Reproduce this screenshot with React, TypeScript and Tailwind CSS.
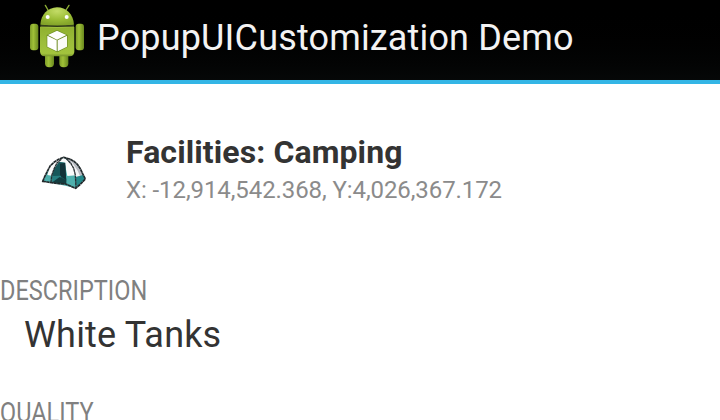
function AndroidIcon() {
  return (
    <svg className="h-20 w-20 shrink-0" viewBox="0 0 240 240" aria-hidden="true">
      <defs>
        <linearGradient id="body" x1="0" x2="0" y1="0" y2="1">
          <stop offset="0" stopColor="#8fb02f" />
          <stop offset=".5" stopColor="#9cbd3a" />
          <stop offset=".9" stopColor="#a3c43d" />
          <stop offset="1" stopColor="#75922a" />
        </linearGradient>
        <linearGradient id="limb" x1="0" x2="1">
          <stop offset="0" stopColor="#7d9c28" />
          <stop offset=".4" stopColor="#a0c138" />
          <stop offset="1" stopColor="#68871d" />
        </linearGradient>
        <radialGradient id="head" cx=".5" cy=".2" r=".75">
          <stop offset="0" stopColor="#c3dc67" />
          <stop offset=".6" stopColor="#9bbd36" />
          <stop offset="1" stopColor="#83a42a" />
        </radialGradient>
      </defs>
      <path d="M84 30 76 16M138 30l9-14" stroke="#8cad34" strokeWidth="4" strokeLinecap="round" />
      <rect x="75" y="153" width="27" height="49" rx="12" fill="url(#limb)" />
      <rect x="118" y="153" width="27" height="49" rx="12" fill="url(#limb)" />
      <rect x="30" y="71" width="25" height="80" rx="9" fill="url(#limb)" />
      <rect x="167" y="71" width="25" height="80" rx="9" fill="url(#limb)" />
      <path d="M60 81H163V154Q163 169 149 169H74Q60 169 60 154Z" fill="url(#body)" />
      <path d="M61 74C63 43 83 23 111 22C139 22 160 43 162 74Q112 83 61 74Z" fill="url(#head)" />
      <path d="M61 76Q111 81 162 76" fill="none" stroke="#34421a" strokeWidth="4" />
      <path d="M61 80Q111 85 162 80" fill="none" stroke="#acc84d" strokeWidth="2" />
      <circle cx="83" cy="51" r="6" fill="#fff" />
      <circle cx="140" cy="51" r="6" fill="#fff" />
      <path d="M80 105 111 90 143 105V141L112 157 80 141Z" fill="#6d8c22" />
      <path d="M84 105 111 92 139 105 111 119Z" fill="#fff" />
      <path d="M82 107 110 121V154L82 140Z" fill="#fff" />
      <path d="M141 107 113 121V154L141 140Z" fill="#fbfbf7" />
    </svg>
  );
}

function TentIcon() {
  return (
    <svg className="h-[60px] w-[70px] shrink-0" viewBox="0 0 210 180" aria-hidden="true">
      <path d="M38 124 53 92 71 68 101 52 132 63 151 86 163 116 137 144 67 129Z" fill="#4fb0ad" />
      <path d="M52 105 58 84 74 66 101 53 125 68 135 86 140 106 112 108 104 68 88 65 73 85 65 107Z" fill="#fafafa" />
      <path d="m108 53 24 11 19 23 8 19-18 5-10-28Z" fill="#b9bcc3" />
      <path d="m123 62 20 30 7 16-13 4-8-29Z" fill="#f4f4f5" />
      <path d="M67 108 72 88 87 66 106 68 109 130 68 128Z" fill="#17575a" />
      <path d="m90 71 15-2 4 52-19-14Z" fill="#123238" />
      <path d="m66 108 27-1-1 20-24-1Z" fill="#267e80" />
      <path d="m68 126 21-15 20 10-1 11Z" fill="#133d40" />
      <path d="m137 111 23-6 5 12-25 26Z" fill="#238889" />
      <path d="M38 124 44 110 53 92 61 77 74 65 86 58 101 52 119 57 132 64 143 74 151 86 158 101 166 117 151 133 137 145 107 132 81 130 52 126Z" fill="none" stroke="#22282b" strokeWidth="5" strokeDasharray="10 1" strokeLinejoin="round" />
      <path d="M94 58 81 69 72 87 65 107 63 127M108 55l15 16 8 14 5 20 2 36" fill="none" stroke="#282f33" strokeWidth="4" strokeDasharray="9 1" />
    </svg>
  );
}

export default function App() {
  return (
    <div className="h-[420px] w-[720px] overflow-hidden bg-white font-['Roboto',sans-serif]">
      <header className="flex h-[84px] border-b-4 border-[#33b5e5] bg-gradient-to-b from-black to-[#060808] pl-5">
        <AndroidIcon />
        <h1 className="-ml-[3px] mt-[14px] whitespace-nowrap text-[36px] leading-[48px] tracking-[0.16px] text-[#f3f3f3]">PopupUICustomization Demo</h1>
      </header>
      <section className="flex h-[190px] gap-[26px] pl-[30px] pt-[48px]">
        <div className="pt-2"><TentIcon /></div>
        <div>
          <h2 className="whitespace-nowrap text-[32px] font-bold leading-[40px] tracking-[0.1px] text-[#333]">Facilities: Camping</h2>
          <p className="whitespace-nowrap text-[24px] leading-[36px] tracking-[-0.09px] text-[#8b8b8b]">X: -12,914,542.368, Y:4,026,367.172</p>
        </div>
      </section>
      <section className="h-[122px]">
        <h3 className="origin-left scale-x-[0.84] text-[28px] leading-[34px] text-[#808080]">DESCRIPTION</h3>
        <p className="pl-[24px] pt-px text-[36px] leading-[52px] tracking-[0.18px] text-[#333]">White Tanks</p>
      </section>
      <h3 className="origin-left scale-x-[0.84] text-[28px] leading-[34px] text-[#808080]">QUALITY</h3>
    </div>
  );
}
